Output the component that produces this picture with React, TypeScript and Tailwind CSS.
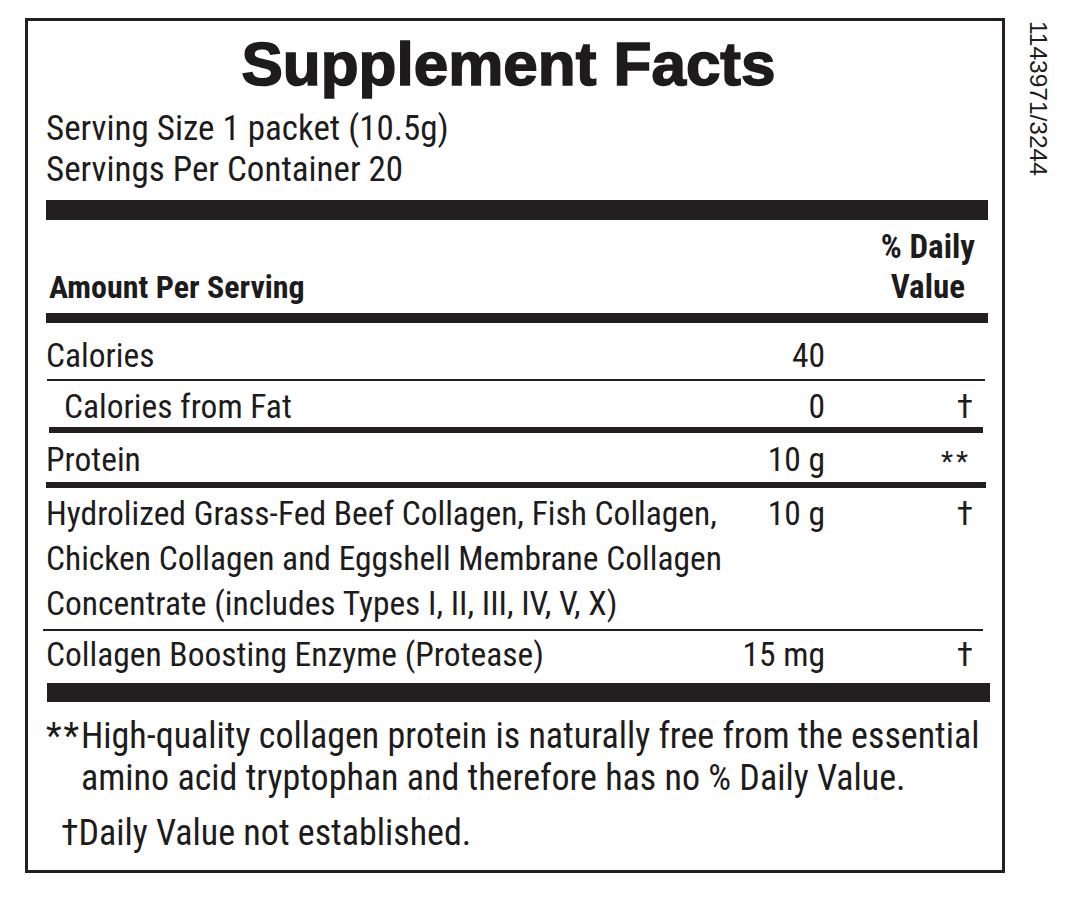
import React from "react";

const Dv = ({ children, cls = "pr-[15px]" }: { children?: React.ReactNode; cls?: string }) => (
  <div className={"w-[163px] shrink-0 text-right " + cls}>{children}</div>
);
const Amt = ({ children }: { children?: React.ReactNode }) => (
  <div className="w-[110px] shrink-0 text-right whitespace-nowrap">{children}</div>
);

export default function App() {
  return (
    <div className="w-[1073px] h-[906px] bg-white flex items-start pl-[25px] pt-[18px] text-[#1d1b1c] font-['Roboto',sans-serif] [font-stretch:75%]">
      <div className="w-[980px] h-[855px] shrink-0 border-[3px] border-[#231f20] pl-[18px] pr-[14px] flex flex-col">
        <div className="mt-[12px] h-[62px] leading-[62px] text-[62px] font-bold text-center pr-[17px] font-['Liberation_Sans',sans-serif] [font-stretch:100%] [-webkit-text-stroke:1.6px_#1d1b1c] whitespace-nowrap">
          Supplement Facts
        </div>
        <div className="mt-[13px] text-[35px] leading-[41px] whitespace-nowrap">
          <div>Serving Size 1 packet (10.5g)</div>
          <div>Servings Per Container 20</div>
        </div>
        <div className="mt-[10px] h-[20px] bg-[#231f20]" />
        <div className="h-[93px] pb-[6px] flex items-end justify-between font-bold text-[33px] leading-[40px]">
          <div className="pl-[3px] text-[32px]">Amount Per Serving</div>
          <div className="text-center pr-[13px] whitespace-nowrap">
            <div>% Daily</div>
            <div>Value</div>
          </div>
        </div>
        <div className="h-[10px] bg-[#231f20]" />
        <div className="text-[33.5px] leading-[45px]">
          <div className="h-[56px] pt-[10px] flex">
            <div className="flex-1 min-w-0">Calories</div>
            <Amt>40</Amt>
            <Dv />
          </div>
          <div className="h-[2px] bg-[#231f20] ml-[1px] mr-[3px]" />
          <div className="h-[46px] pt-[3px] flex">
            <div className="flex-1 min-w-0 pl-[18px]">Calories from Fat</div>
            <Amt>0</Amt>
            <Dv>†</Dv>
          </div>
          <div className="h-[6px] bg-[#231f20] ml-[3px] mr-[5px]" />
          <div className="h-[49px] pt-[4px] flex">
            <div className="flex-1 min-w-0">Protein</div>
            <Amt>10 g</Amt>
            <Dv cls="pr-[17px]">
              <span className="text-[28px] tracking-[3px]">**</span>
            </Dv>
          </div>
          <div className="h-[6px] bg-[#231f20] mr-[2px]" />
          <div className="h-[141px] pt-[3px] flex">
            <div className="flex-1 min-w-0 whitespace-nowrap">
              Hydrolized Grass-Fed Beef Collagen, Fish Collagen,
              <br />
              Chicken Collagen and Eggshell Membrane Collagen
              <br />
              Concentrate (includes Types I, II, III, IV, V, X)
            </div>
            <Amt>10 g</Amt>
            <Dv>†</Dv>
          </div>
          <div className="h-[2px] bg-[#231f20] ml-[-3px] mr-[5px]" />
          <div className="h-[52px] pt-[1px] flex">
            <div className="flex-1 min-w-0 whitespace-nowrap">Collagen Boosting Enzyme (Protease)</div>
            <Amt>15 mg</Amt>
            <Dv>†</Dv>
          </div>
        </div>
        <div className="h-[19px] bg-[#231f20] ml-[1px] mr-[-2px]" />
        <div className="pt-[13px] text-[36px] leading-[42px] flex">
          <div className="w-[35px] shrink-0 tracking-[2px]">**</div>
          <div className="whitespace-nowrap">
            High-quality collagen protein is naturally free from the essential
            <br />
            amino acid tryptophan and therefore has no % Daily Value.
          </div>
        </div>
        <div className="mt-[13px] pl-[15px] text-[36px] leading-[42px] whitespace-nowrap">
          †Daily Value not established.
        </div>
      </div>
      <div className="ml-[21px] mt-[3px] text-[24.5px] leading-[24px] font-['Liberation_Sans',sans-serif] [font-stretch:100%] [writing-mode:vertical-rl] whitespace-nowrap">
        1143971/3244
      </div>
    </div>
  );
}
